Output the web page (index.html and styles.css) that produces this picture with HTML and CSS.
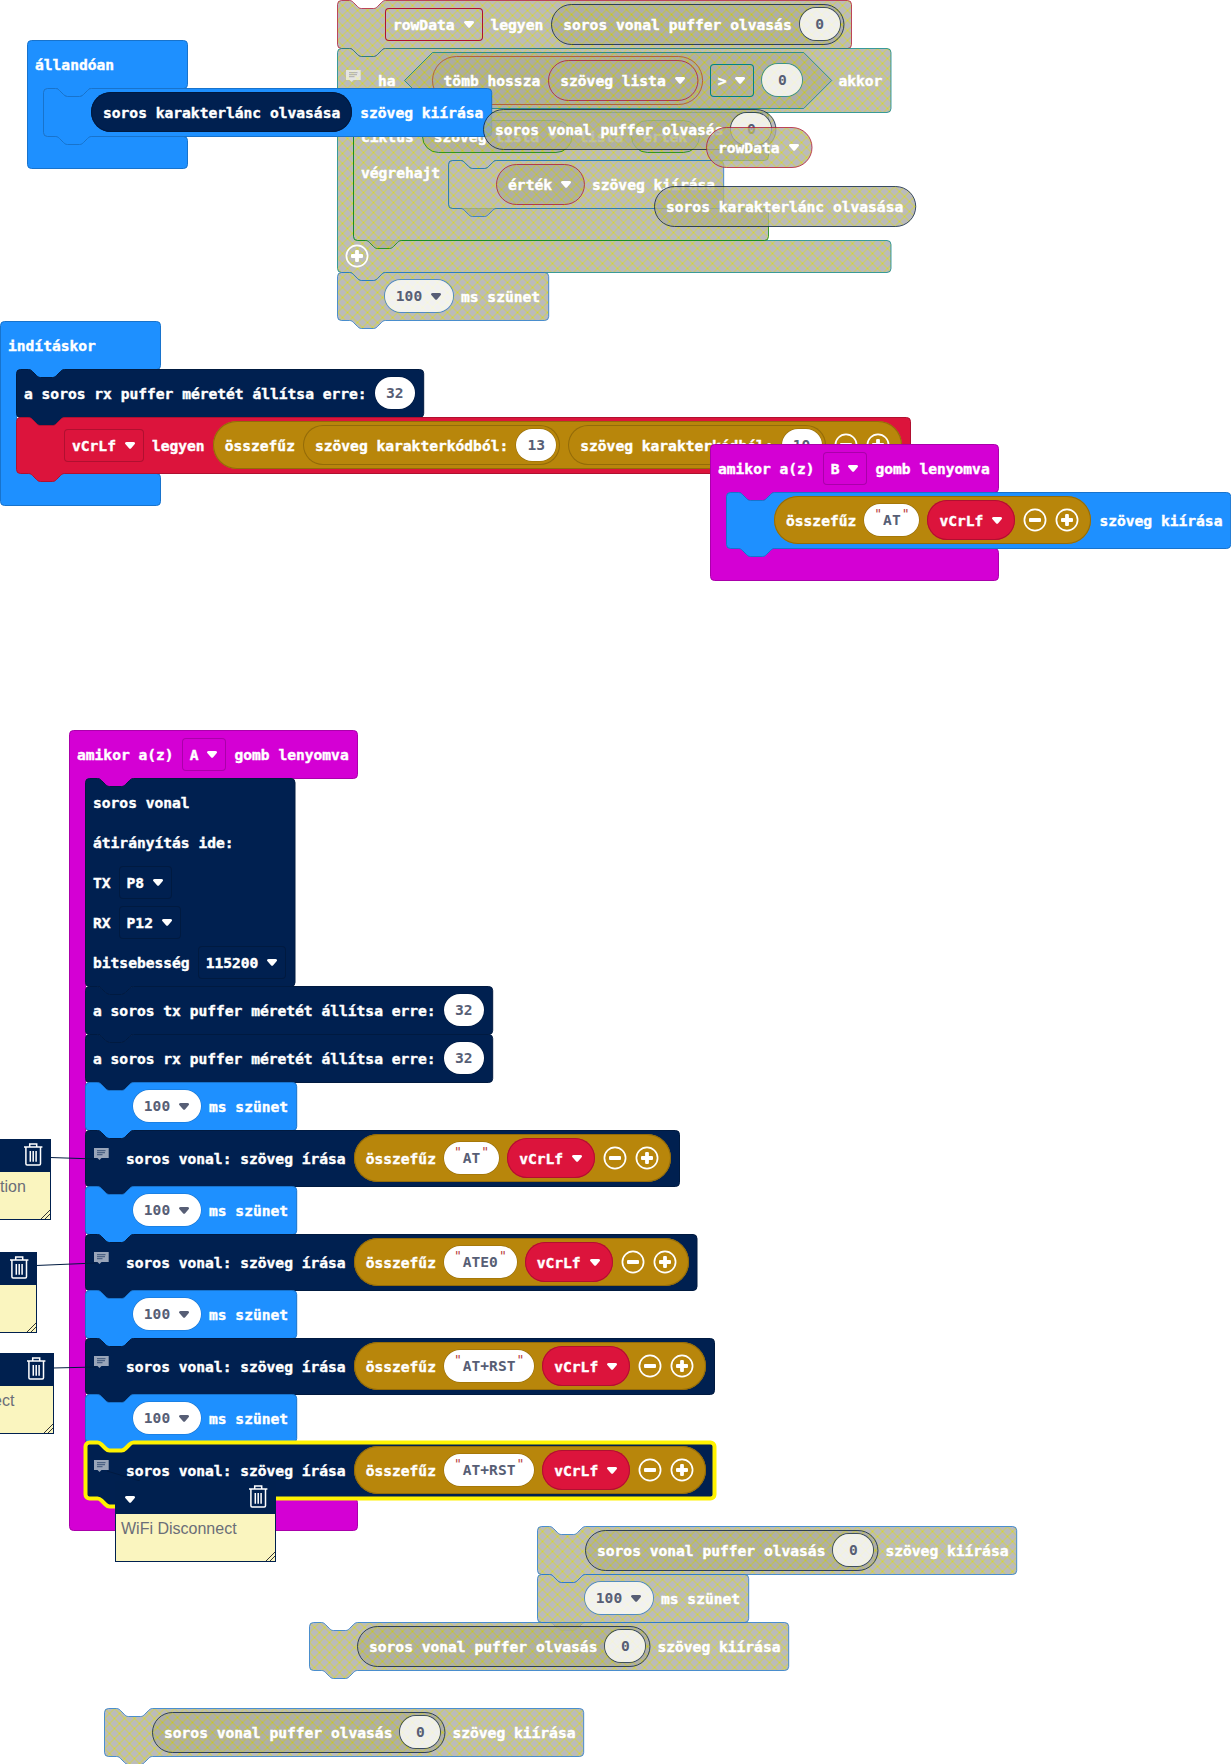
FILE: index.html
```html
<!DOCTYPE html>
<html lang="hu">
<head>
<meta charset="utf-8">
<title>Blokkok</title>
<link rel="stylesheet" href="styles.css">
</head>
<body>
<svg class="defs" width="0" height="0" aria-hidden="true">
  <defs>
    <pattern id="hatch" patternUnits="userSpaceOnUse" width="10" height="10">
      <rect width="10" height="10" fill="#aaa"/>
      <path d="M0 0L10 10M10 0L0 10" stroke="#cc0" fill="none"/>
    </pattern>
    <path id="s-pause" d="M0 4a4 4 0 0 1 4-4h8c2 0 3 1 4 2l4 4c1 1 2 2 4 2h12c2 0 3-1 4-2l4-4c1-1 2-2 4-2H207.2a4 4 0 0 1 4 4V44a4 4 0 0 1-4 4H48c-2 0-3 1-4 2l-4 4c-1 1-2 2-4 2H24c-2 0-3-1-4-2l-4-4c-1-1-2-2-4-2H4a4 4 0 0 1-4-4z"/>
    <path id="s-buffer" d="M0 4a4 4 0 0 1 4-4h8c2 0 3 1 4 2l4 4c1 1 2 2 4 2h12c2 0 3-1 4-2l4-4c1-1 2-2 4-2H403.2a4 4 0 0 1 4 4V44a4 4 0 0 1-4 4H48c-2 0-3 1-4 2l-4 4c-1 1-2 2-4 2H24c-2 0-3-1-4-2l-4-4c-1-1-2-2-4-2H4a4 4 0 0 1-4-4z"/>
    <path id="s-print" d="M0 4a4 4 0 0 1 4-4h8c2 0 3 1 4 2l4 4c1 1 2 2 4 2h12c2 0 3-1 4-2l4-4c1-1 2-2 4-2H475.2a4 4 0 0 1 4 4V44a4 4 0 0 1-4 4H48c-2 0-3 1-4 2l-4 4c-1 1-2 2-4 2H24c-2 0-3-1-4-2l-4-4c-1-1-2-2-4-2H4a4 4 0 0 1-4-4z"/>
    <path id="s-write6" d="M0 4a4 4 0 0 1 4-4h8c2 0 3 1 4 2l4 4c1 1 2 2 4 2h12c2 0 3-1 4-2l4-4c1-1 2-2 4-2H625a4 4 0 0 1 4 4V52a4 4 0 0 1-4 4H48c-2 0-3 1-4 2l-4 4c-1 1-2 2-4 2H24c-2 0-3-1-4-2l-4-4c-1-1-2-2-4-2H4a4 4 0 0 1-4-4z"/>
    <symbol id="arrow" viewBox="0 0 12 7"><path d="M2.6 0h6.9c1.4 0 2 1 1.3 2L7.2 6.2c-.6.7-1.6.7-2.2 0L1.3 2C.6 1 1.200 0 2.6 0z" fill="currentColor"/></symbol>
    <symbol id="minus" viewBox="0 0 24 24"><circle cx="12" cy="12" r="10.6" fill="none" stroke="#fff" stroke-width="1.700"/><rect x="6" y="10.100" width="12" height="3.800" rx="1" fill="#fff"/></symbol>
    <symbol id="plus" viewBox="0 0 24 24"><circle cx="12" cy="12" r="10.6" fill="none" stroke="#fff" stroke-width="1.700"/><path d="M7 10.100h3.100V7q0-1 1-1h1.800q1 0 1 1v3.100H17q1 0 1 1v1.800q0 1-1 1h-3.100V17q0 1-1 1h-1.800q-1 0-1-1v-3.100H7q-1 0-1-1v-1.800q0-1 1-1z" fill="#fff"/></symbol>
    <symbol id="note" viewBox="0 0 15 12"><path d="M0 0h14.700v10H7.500L5.500 12 3.500 10H0z" fill="#fff" fill-opacity=".6"/><path d="M3 2.700h8.500M3 4.700h8M3 6.700h5.500" stroke="currentColor" stroke-width="1.300" stroke-opacity=".5"/></symbol>
    <symbol id="trash" viewBox="0 0 19 23"><path d="M5.700 3.700V1h7v2.700M0 3.900h18.400M1.900 4v16.700q0 1.200 1.200 1.200h12.200q1.200 0 1.200-1.200V4M6.300 8v10.700M9.200 8v10.700M12.100 8v10.700" fill="none" stroke="#fff" stroke-width="1.500"/></symbol>
    <symbol id="grip" viewBox="0 0 9 9"><path d="M0 9L9 0M4 9l5-5" stroke="#333" stroke-width="1" fill="none"/></symbol>
  </defs>
</svg>

<main class="workspace">

  <section class="stack disabled at-rows">
    <div class="block variable slot">
      <svg class="shape"><path d="M0 4a4 4 0 0 1 4-4h8c2 0 3 1 4 2l4 4c1 1 2 2 4 2h12c2 0 3-1 4-2l4-4c1-1 2-2 4-2H510a4 4 0 0 1 4 4V44a4 4 0 0 1-4 4H48c-2 0-3 1-4 2l-4 4c-1 1-2 2-4 2H24c-2 0-3-1-4-2l-4-4c-1-1-2-2-4-2H4a4 4 0 0 1-4-4z"/></svg>
      <span class="menu"><span class="t">rowData</span><svg class="arrow"><use href="#arrow"/></svg></span>
      <span class="t">legyen</span>
      <span class="pill serial"><svg class="shape"><rect width="100%" height="100%" rx="20"/></svg><span class="t">soros vonal puffer olvasás</span><span class="num">0</span></span>
    </div>
    <div class="c-block logic">
      <svg class="shape"><path d="M0 4a4 4 0 0 1 4-4h8c2 0 3 1 4 2l4 4c1 1 2 2 4 2h12c2 0 3-1 4-2l4-4c1-1 2-2 4-2H549.500a4 4 0 0 1 4 4V60a4 4 0 0 1-4 4H64c-2 0-3 1-4 2l-4 4c-1 1-2 2-4 2H40c-2 0-3-1-4-2l-4-4c-1-1-2-2-4-2H20a4 4 0 0 0-4 4V188a4 4 0 0 0 4 4H549.500a4 4 0 0 1 4 4V220a4 4 0 0 1-4 4H48c-2 0-3 1-4 2l-4 4c-1 1-2 2-4 2H24c-2 0-3-1-4-2l-4-4c-1-1-2-2-4-2H4a4 4 0 0 1-4-4z"/></svg>
      <div class="block noted h64">
        <svg class="note"><use href="#note"/></svg>
        <span class="t">ha</span>
        <span class="hex logic"><svg class="shape"><path d="M28 0H399.200L427.200 28L399.200 56H28L0 28z"/></svg>
          <span class="pill tall array"><svg class="shape"><rect width="100%" height="100%" rx="24"/></svg><span class="t">tömb hossza</span>
            <span class="pill variable var"><svg class="shape"><rect width="100%" height="100%" rx="20"/></svg><span class="t">szöveg lista</span><svg class="arrow"><use href="#arrow"/></svg></span></span>
          <span class="menu"><span class="t">&gt;</span><svg class="arrow"><use href="#arrow"/></svg></span>
          <span class="num">0</span>
        </span>
        <span class="t">akkor</span>
      </div>
      <div class="mouth">
        <div class="c-block loop">
          <svg class="shape"><path d="M0 4a4 4 0 0 1 4-4h8c2 0 3 1 4 2l4 4c1 1 2 2 4 2h12c2 0 3-1 4-2l4-4c1-1 2-2 4-2H411a4 4 0 0 1 4 4V44a4 4 0 0 1-4 4H143.200c-2 0-3 1-4 2l-4 4c-1 1-2 2-4 2h-12c-2 0-3-1-4-2l-4-4c-1-1-2-2-4-2H99.200a4 4 0 0 0-4 4V92a4 4 0 0 0 4 4H411a4 4 0 0 1 4 4V124a4 4 0 0 1-4 4H48c-2 0-3 1-4 2l-4 4c-1 1-2 2-4 2H24c-2 0-3-1-4-2l-4-4c-1-1-2-2-4-2H4a4 4 0 0 1-4-4z"/></svg>
          <div class="block">
            <span class="t">ciklus</span>
            <span class="pill low var"><svg class="shape"><rect width="100%" height="100%" rx="16"/></svg><span class="t">szöveg lista</span><svg class="arrow"><use href="#arrow"/></svg></span>
            <span class="t">lista</span>
            <span class="pill low var"><svg class="shape"><rect width="100%" height="100%" rx="16"/></svg><span class="t">érték</span></span>
          </div>
          <div class="do-row">
            <span class="t">végrehajt</span>
            <div class="block basic slot">
              <svg class="shape"><path d="M0 4a4 4 0 0 1 4-4h8c2 0 3 1 4 2l4 4c1 1 2 2 4 2h12c2 0 3-1 4-2l4-4c1-1 2-2 4-2H271.200a4 4 0 0 1 4 4V44a4 4 0 0 1-4 4H48c-2 0-3 1-4 2l-4 4c-1 1-2 2-4 2H24c-2 0-3-1-4-2l-4-4c-1-1-2-2-4-2H4a4 4 0 0 1-4-4z"/></svg>
              <span class="pill variable var"><svg class="shape"><rect width="100%" height="100%" rx="20"/></svg><span class="t">érték</span><svg class="arrow"><use href="#arrow"/></svg></span>
              <span class="t">szöveg kiírása</span>
            </div>
          </div>
          <div class="foot"></div>
        </div>
      </div>
      <div class="foot"><svg class="round"><use href="#plus"/></svg></div>
    </div>
    <div class="block basic slot">
      <svg class="shape"><use href="#s-pause"/></svg>
      <span class="num wide"><span>100</span><svg class="arrow"><use href="#arrow"/></svg></span>
      <span class="t">ms szünet</span>
    </div>
  </section>

  <section class="stack at-forever">
    <div class="c-block basic">
      <svg class="shape"><path d="M0 4a4 4 0 0 1 4-4H156a4 4 0 0 1 4 4V44a4 4 0 0 1-4 4H64c-2 0-3 1-4 2l-4 4c-1 1-2 2-4 2H40c-2 0-3-1-4-2l-4-4c-1-1-2-2-4-2H20a4 4 0 0 0-4 4V92a4 4 0 0 0 4 4H156a4 4 0 0 1 4 4V124a4 4 0 0 1-4 4H4a4 4 0 0 1-4-4z"/></svg>
      <div class="block"><span class="t">állandóan</span></div>
      <div class="mouth">
        <div class="block basic slot">
          <svg class="shape"><path d="M0 4a4 4 0 0 1 4-4h8c2 0 3 1 4 2l4 4c1 1 2 2 4 2h12c2 0 3-1 4-2l4-4c1-1 2-2 4-2H444.200a4 4 0 0 1 4 4V44a4 4 0 0 1-4 4H48c-2 0-3 1-4 2l-4 4c-1 1-2 2-4 2H24c-2 0-3-1-4-2l-4-4c-1-1-2-2-4-2H4a4 4 0 0 1-4-4z"/></svg>
          <span class="pill serial var"><span class="t">soros karakterlánc olvasása</span></span>
          <span class="t">szöveg kiírása</span>
        </div>
      </div>
      <div class="foot"></div>
    </div>
  </section>

  <section class="stack disabled at-read">
    <span class="pill serial"><svg class="shape"><rect width="100%" height="100%" rx="20"/></svg><span class="t">soros vonal puffer olvasás</span><span class="num">0</span></span>
  </section>
  <section class="stack disabled at-rowdata">
    <span class="pill variable var"><svg class="shape"><rect width="100%" height="100%" rx="20"/></svg><span class="t">rowData</span><svg class="arrow"><use href="#arrow"/></svg></span>
  </section>
  <section class="stack disabled at-string">
    <span class="pill serial var"><svg class="shape"><rect width="100%" height="100%" rx="20"/></svg><span class="t">soros karakterlánc olvasása</span></span>
  </section>

  <section class="stack at-start">
    <div class="c-block basic">
      <svg class="shape"><path d="M0 4a4 4 0 0 1 4-4H156a4 4 0 0 1 4 4V44a4 4 0 0 1-4 4H64c-2 0-3 1-4 2l-4 4c-1 1-2 2-4 2H40c-2 0-3-1-4-2l-4-4c-1-1-2-2-4-2H20a4 4 0 0 0-4 4V148a4 4 0 0 0 4 4H156a4 4 0 0 1 4 4V180a4 4 0 0 1-4 4H4a4 4 0 0 1-4-4z"/></svg>
      <div class="block"><span class="t">indításkor</span></div>
      <div class="mouth">
        <div class="block serial">
          <svg class="shape"><use href="#s-buffer"/></svg>
          <span class="t">a soros rx puffer méretét állítsa erre:</span><span class="num">32</span>
        </div>
        <div class="block variable slot h56">
          <svg class="shape"><path d="M0 4a4 4 0 0 1 4-4h8c2 0 3 1 4 2l4 4c1 1 2 2 4 2h12c2 0 3-1 4-2l4-4c1-1 2-2 4-2H890a4 4 0 0 1 4 4V52a4 4 0 0 1-4 4H48c-2 0-3 1-4 2l-4 4c-1 1-2 2-4 2H24c-2 0-3-1-4-2l-4-4c-1-1-2-2-4-2H4a4 4 0 0 1-4-4z"/></svg>
          <span class="menu"><span class="t">vCrLf</span><svg class="arrow"><use href="#arrow"/></svg></span>
          <span class="t">legyen</span>
          <span class="pill tall text var">
            <span class="t">összefűz</span>
            <span class="pill text"><span class="t">szöveg karakterkódból:</span><span class="num">13</span></span>
            <span class="pill text"><span class="t">szöveg karakterkódból:</span><span class="num">10</span></span>
            <svg class="round"><use href="#minus"/></svg><svg class="round"><use href="#plus"/></svg>
          </span>
        </div>
      </div>
      <div class="foot"></div>
    </div>
  </section>

  <section class="stack at-button-b">
    <div class="c-block input">
      <svg class="shape"><path d="M0 4a4 4 0 0 1 4-4H284a4 4 0 0 1 4 4V44a4 4 0 0 1-4 4H64c-2 0-3 1-4 2l-4 4c-1 1-2 2-4 2H40c-2 0-3-1-4-2l-4-4c-1-1-2-2-4-2H20a4 4 0 0 0-4 4V100a4 4 0 0 0 4 4H284a4 4 0 0 1 4 4V132a4 4 0 0 1-4 4H4a4 4 0 0 1-4-4z"/></svg>
      <div class="block"><span class="t">amikor a(z)</span><span class="menu"><span class="t">B</span><svg class="arrow"><use href="#arrow"/></svg></span><span class="t">gomb lenyomva</span></div>
      <div class="mouth">
        <div class="block basic slot h56">
          <svg class="shape"><path d="M0 4a4 4 0 0 1 4-4h8c2 0 3 1 4 2l4 4c1 1 2 2 4 2h12c2 0 3-1 4-2l4-4c1-1 2-2 4-2H500.200a4 4 0 0 1 4 4V52a4 4 0 0 1-4 4H48c-2 0-3 1-4 2l-4 4c-1 1-2 2-4 2H24c-2 0-3-1-4-2l-4-4c-1-1-2-2-4-2H4a4 4 0 0 1-4-4z"/></svg>
          <span class="pill tall text var">
            <span class="t">összefűz</span><span class="str"><i>"</i><span>AT</span><i>"</i></span>
            <span class="pill variable var"><span class="t">vCrLf</span><svg class="arrow"><use href="#arrow"/></svg></span>
            <svg class="round"><use href="#minus"/></svg><svg class="round"><use href="#plus"/></svg>
          </span>
          <span class="t">szöveg kiírása</span>
        </div>
      </div>
      <div class="foot"></div>
    </div>
  </section>

  <section class="stack at-button-a">
    <div class="c-block input">
      <svg class="shape"><path d="M0 4a4 4 0 0 1 4-4H284a4 4 0 0 1 4 4V44a4 4 0 0 1-4 4H64c-2 0-3 1-4 2l-4 4c-1 1-2 2-4 2H40c-2 0-3-1-4-2l-4-4c-1-1-2-2-4-2H20a4 4 0 0 0-4 4V764a4 4 0 0 0 4 4H284a4 4 0 0 1 4 4V796a4 4 0 0 1-4 4H4a4 4 0 0 1-4-4z"/></svg>
      <div class="block"><span class="t">amikor a(z)</span><span class="menu"><span class="t">A</span><svg class="arrow"><use href="#arrow"/></svg></span><span class="t">gomb lenyomva</span></div>
      <div class="mouth">
        <div class="block serial lines">
          <svg class="shape"><path d="M0 4a4 4 0 0 1 4-4h8c2 0 3 1 4 2l4 4c1 1 2 2 4 2h12c2 0 3-1 4-2l4-4c1-1 2-2 4-2H205.500a4 4 0 0 1 4 4V204a4 4 0 0 1-4 4H48c-2 0-3 1-4 2l-4 4c-1 1-2 2-4 2H24c-2 0-3-1-4-2l-4-4c-1-1-2-2-4-2H4a4 4 0 0 1-4-4z"/></svg>
          <div class="line"><span class="t">soros vonal</span></div>
          <div class="line"><span class="t">átirányítás ide:</span></div>
          <div class="line"><span class="t">TX</span><span class="menu"><span class="t">P8</span><svg class="arrow"><use href="#arrow"/></svg></span></div>
          <div class="line"><span class="t">RX</span><span class="menu"><span class="t">P12</span><svg class="arrow"><use href="#arrow"/></svg></span></div>
          <div class="line"><span class="t">bitsebesség</span><span class="menu"><span class="t">115200</span><svg class="arrow"><use href="#arrow"/></svg></span></div>
        </div>
        <div class="block serial">
          <svg class="shape"><use href="#s-buffer"/></svg>
          <span class="t">a soros tx puffer méretét állítsa erre:</span><span class="num">32</span>
        </div>
        <div class="block serial">
          <svg class="shape"><use href="#s-buffer"/></svg>
          <span class="t">a soros rx puffer méretét állítsa erre:</span><span class="num">32</span>
        </div>
        <div class="block basic slot">
          <svg class="shape"><use href="#s-pause"/></svg>
          <span class="num wide"><span>100</span><svg class="arrow"><use href="#arrow"/></svg></span><span class="t">ms szünet</span>
        </div>
        <div class="block serial noted h56">
          <svg class="shape"><path d="M0 4a4 4 0 0 1 4-4h8c2 0 3 1 4 2l4 4c1 1 2 2 4 2h12c2 0 3-1 4-2l4-4c1-1 2-2 4-2H590a4 4 0 0 1 4 4V52a4 4 0 0 1-4 4H48c-2 0-3 1-4 2l-4 4c-1 1-2 2-4 2H24c-2 0-3-1-4-2l-4-4c-1-1-2-2-4-2H4a4 4 0 0 1-4-4z"/></svg>
          <svg class="note"><use href="#note"/></svg>
          <span class="t">soros vonal: szöveg írása</span>
          <span class="pill tall text var">
            <span class="t">összefűz</span><span class="str"><i>"</i><span>AT</span><i>"</i></span>
            <span class="pill variable var"><span class="t">vCrLf</span><svg class="arrow"><use href="#arrow"/></svg></span>
            <svg class="round"><use href="#minus"/></svg><svg class="round"><use href="#plus"/></svg>
          </span>
        </div>
        <div class="block basic slot">
          <svg class="shape"><use href="#s-pause"/></svg>
          <span class="num wide"><span>100</span><svg class="arrow"><use href="#arrow"/></svg></span><span class="t">ms szünet</span>
        </div>
        <div class="block serial noted h56">
          <svg class="shape"><path d="M0 4a4 4 0 0 1 4-4h8c2 0 3 1 4 2l4 4c1 1 2 2 4 2h12c2 0 3-1 4-2l4-4c1-1 2-2 4-2H607.500a4 4 0 0 1 4 4V52a4 4 0 0 1-4 4H48c-2 0-3 1-4 2l-4 4c-1 1-2 2-4 2H24c-2 0-3-1-4-2l-4-4c-1-1-2-2-4-2H4a4 4 0 0 1-4-4z"/></svg>
          <svg class="note"><use href="#note"/></svg>
          <span class="t">soros vonal: szöveg írása</span>
          <span class="pill tall text var">
            <span class="t">összefűz</span><span class="str"><i>"</i><span>ATE0</span><i>"</i></span>
            <span class="pill variable var"><span class="t">vCrLf</span><svg class="arrow"><use href="#arrow"/></svg></span>
            <svg class="round"><use href="#minus"/></svg><svg class="round"><use href="#plus"/></svg>
          </span>
        </div>
        <div class="block basic slot">
          <svg class="shape"><use href="#s-pause"/></svg>
          <span class="num wide"><span>100</span><svg class="arrow"><use href="#arrow"/></svg></span><span class="t">ms szünet</span>
        </div>
        <div class="block serial noted h56">
          <svg class="shape"><use href="#s-write6"/></svg>
          <svg class="note"><use href="#note"/></svg>
          <span class="t">soros vonal: szöveg írása</span>
          <span class="pill tall text var">
            <span class="t">összefűz</span><span class="str"><i>"</i><span>AT+RST</span><i>"</i></span>
            <span class="pill variable var"><span class="t">vCrLf</span><svg class="arrow"><use href="#arrow"/></svg></span>
            <svg class="round"><use href="#minus"/></svg><svg class="round"><use href="#plus"/></svg>
          </span>
        </div>
        <div class="block basic slot">
          <svg class="shape"><use href="#s-pause"/></svg>
          <span class="num wide"><span>100</span><svg class="arrow"><use href="#arrow"/></svg></span><span class="t">ms szünet</span>
        </div>
        <div class="block serial noted h56 selected">
          <svg class="shape"><use href="#s-write6"/></svg>
          <svg class="note"><use href="#note"/></svg>
          <span class="t">soros vonal: szöveg írása</span>
          <span class="pill tall text var">
            <span class="t">összefűz</span><span class="str"><i>"</i><span>AT+RST</span><i>"</i></span>
            <span class="pill variable var"><span class="t">vCrLf</span><svg class="arrow"><use href="#arrow"/></svg></span>
            <svg class="round"><use href="#minus"/></svg><svg class="round"><use href="#plus"/></svg>
          </span>
        </div>
      </div>
      <div class="foot"></div>
    </div>
  </section>

  <section class="stack disabled at-print-1">
    <div class="block basic slot">
      <svg class="shape"><use href="#s-print"/></svg>
      <span class="pill serial"><svg class="shape"><rect width="100%" height="100%" rx="20"/></svg><span class="t">soros vonal puffer olvasás</span><span class="num">0</span></span>
      <span class="t">szöveg kiírása</span>
    </div>
    <div class="block basic slot">
      <svg class="shape"><use href="#s-pause"/></svg>
      <span class="num wide"><span>100</span><svg class="arrow"><use href="#arrow"/></svg></span><span class="t">ms szünet</span>
    </div>
  </section>
  <section class="stack disabled at-print-2">
    <div class="block basic slot">
      <svg class="shape"><use href="#s-print"/></svg>
      <span class="pill serial"><svg class="shape"><rect width="100%" height="100%" rx="20"/></svg><span class="t">soros vonal puffer olvasás</span><span class="num">0</span></span>
      <span class="t">szöveg kiírása</span>
    </div>
  </section>
  <section class="stack disabled at-print-3">
    <div class="block basic slot">
      <svg class="shape"><use href="#s-print"/></svg>
      <span class="pill serial"><svg class="shape"><rect width="100%" height="100%" rx="20"/></svg><span class="t">soros vonal puffer olvasás</span><span class="num">0</span></span>
      <span class="t">szöveg kiírása</span>
    </div>
  </section>

  <svg class="links" width="160" height="1764" aria-hidden="true"><path d="M50 1157.500L96 1159M36 1265.500L96 1263M53 1368L96 1367M107 1471L140 1481"/></svg>

  <aside class="comment at-comment-1"><header><svg class="trash"><use href="#trash"/></svg></header><p>tion</p><svg class="grip"><use href="#grip"/></svg></aside>
  <aside class="comment at-comment-2"><header><svg class="trash"><use href="#trash"/></svg></header><svg class="grip"><use href="#grip"/></svg></aside>
  <aside class="comment at-comment-3"><header><svg class="trash"><use href="#trash"/></svg></header><p>ect</p><svg class="grip"><use href="#grip"/></svg></aside>
  <aside class="comment at-comment-4"><header><svg class="arrow"><use href="#arrow"/></svg><svg class="trash"><use href="#trash"/></svg></header><p>WiFi Disconnect</p><svg class="grip"><use href="#grip"/></svg></aside>
</main>
</body>
</html>
```
FILE: styles.css
```css
* { box-sizing: border-box; }

body {
  margin: 0;
  background: #fff;
}

.defs { position: absolute; }

.workspace {
  position: relative;
  width: 1231px;
  height: 1764px;
  overflow: hidden;
  color: #fff;
  font: bold 14.6px/20px "DejaVu Sans Mono", "Liberation Mono", monospace;
  white-space: nowrap;
}

/* Places of the free-floating stacks on the canvas */
.stack { position: absolute; }
.at-rows { left: 337px; top: 0; }
.at-forever { left: 27px; top: 40px; }
.at-read { left: 483px; top: 109px; }
.at-rowdata { left: 706px; top: 127px; }
.at-string { left: 654px; top: 186px; }
.at-start { left: 0; top: 321px; }
.at-button-b { left: 710px; top: 444px; }
.at-button-a { left: 69px; top: 730px; }
.at-print-1 { left: 537px; top: 1526px; }
.at-print-2 { left: 309px; top: 1622px; }
.at-print-3 { left: 104px; top: 1708px; }

/* Category colours */
.basic { --fill: #1e90ff; --edge: #1873cc; }
.serial { --fill: #002050; --edge: #001a40; }
.variable { --fill: #dc143c; --edge: #b01030; }
.input { --fill: #d400d4; --edge: #aa00aa; }
.text { --fill: #b8860b; --edge: #936b09; }
.logic { --fill: #00a4a6; --edge: #008385; }
.loop { --fill: #00aa00; --edge: #008800; }
.array { --fill: #e65722; --edge: #b8461b; }

.shape {
  position: absolute;
  left: 0;
  top: 0;
  width: 100%;
  height: 100%;
  overflow: visible;
  fill: var(--fill);
  stroke: var(--edge);
}
.shape > * { transform: translate(.5px, .5px); }
.disabled .shape {
  fill: url(#hatch);
  fill-opacity: .8;
  stroke-opacity: .75;
}
.selected > .shape {
  stroke: #fff200;
  stroke-width: 4px;
}

.c-block { position: relative; }
.mouth { padding-left: 16px; }
.foot {
  display: flex;
  align-items: center;
  height: 32px;
  padding-left: 8px;
}

.block {
  position: relative;
  display: flex;
  align-items: center;
  gap: 8px;
  height: 48px;
  padding: 0 8px;
  width: max-content;
}
.slot { padding-left: 48px; }
.h56 { height: 56px; }
.h64 { height: 64px; }
.lines {
  flex-direction: column;
  align-items: flex-start;
  height: 208px;
  padding: 8px;
}
.line {
  display: flex;
  align-items: center;
  gap: 8px;
  height: 32px;
}
.do-row { display: flex; gap: 8px; padding-left: 8px; }
.do-row > .t { margin-top: 2px; }

.t {
  position: relative;
  padding-top: 1px;
  -webkit-text-stroke: .4px currentColor;
}

.noted { padding-left: 9px; }
.note {
  position: relative;
  flex: none;
  width: 15px;
  height: 12px;
  margin: 0 9px 8px 0;
  color: var(--fill);
}
.disabled .note { color: #888; }

.pill {
  position: relative;
  display: inline-flex;
  align-items: center;
  gap: 8px;
  height: 40px;
  padding: 0 4px 0 12px;
  border-radius: 28px;
  background: var(--fill);
  box-shadow: inset 0 0 0 1px var(--edge);
}
.pill.var { padding-right: 12px; }
.pill.tall { height: 48px; padding-right: 4px; }
.pill.tall.var { padding-right: 12px; }
.pill.low { height: 32px; }
.disabled .pill { background: none; box-shadow: none; }

.hex {
  position: relative;
  display: inline-flex;
  align-items: center;
  gap: 8px;
  height: 56px;
  padding: 0 28px;
}

.menu {
  position: relative;
  display: inline-flex;
  align-items: center;
  gap: 8px;
  height: 33px;
  padding: 0 8px;
  border-radius: 4px;
  box-shadow: inset 0 0 0 1px var(--edge);
}

.num {
  position: relative;
  display: inline-flex;
  align-items: center;
  justify-content: center;
  gap: 8px;
  width: 40px;
  height: 32px;
  border-radius: 16px;
  background: #fff;
  color: #575e75;
  box-shadow: 0 0 0 .5px var(--edge);
}
.num.wide { width: 68px; }
.disabled .num {
  background: rgba(255, 255, 255, .8);
  box-shadow: 0 0 0 1px color-mix(in srgb, var(--edge) 65%, transparent);
}

.str {
  position: relative;
  display: inline-flex;
  align-items: center;
  height: 32px;
  padding: 0 10px;
  border-radius: 16px;
  background: #fff;
  color: #575e75;
  box-shadow: 0 0 0 .5px var(--edge);
}
.str i {
  width: 8.8px;
  margin-bottom: 12px;
  color: #b83c3c;
  font-size: 13px;
  font-style: normal;
  font-weight: normal;
  text-align: left;
}
.str i:last-child { text-align: right; }

.arrow {
  position: relative;
  flex: none;
  width: 12px;
  height: 7px;
}
.round {
  position: relative;
  flex: none;
  width: 24px;
  height: 24px;
  margin-top: -1px;
}

.links { position: absolute; left: 0; top: 0; }
.links path { stroke: #001a40; fill: none; }

/* Comment bubbles */
.comment {
  position: absolute;
  width: 161px;
  height: 81px;
  border: 1px solid #00204f;
  background: #faf5bf;
  color: #6b6e78;
  font: 16px/20px "Liberation Sans", Arial, sans-serif;
}
.comment header {
  display: flex;
  align-items: center;
  height: 32px;
  padding: 0 7px 0 8px;
  background: #00204f;
  color: #fff;
}
.comment p { margin: 5px 0 0 5px; }
.comment .arrow { margin-top: 3px; }
.trash {
  width: 19px;
  height: 23px;
  margin: -3px 0 0 auto;
}
.grip {
  position: absolute;
  right: 0;
  bottom: 0;
  width: 9px;
  height: 9px;
}
.at-comment-1 { left: -110px; top: 1139px; }
.at-comment-1 p { padding-left: 104px; }
.at-comment-2 { left: -124px; top: 1252px; }
.at-comment-3 { left: -107px; top: 1353px; }
.at-comment-3 p { padding-left: 94px; }
.at-comment-4 { left: 115px; top: 1481px; }
```
